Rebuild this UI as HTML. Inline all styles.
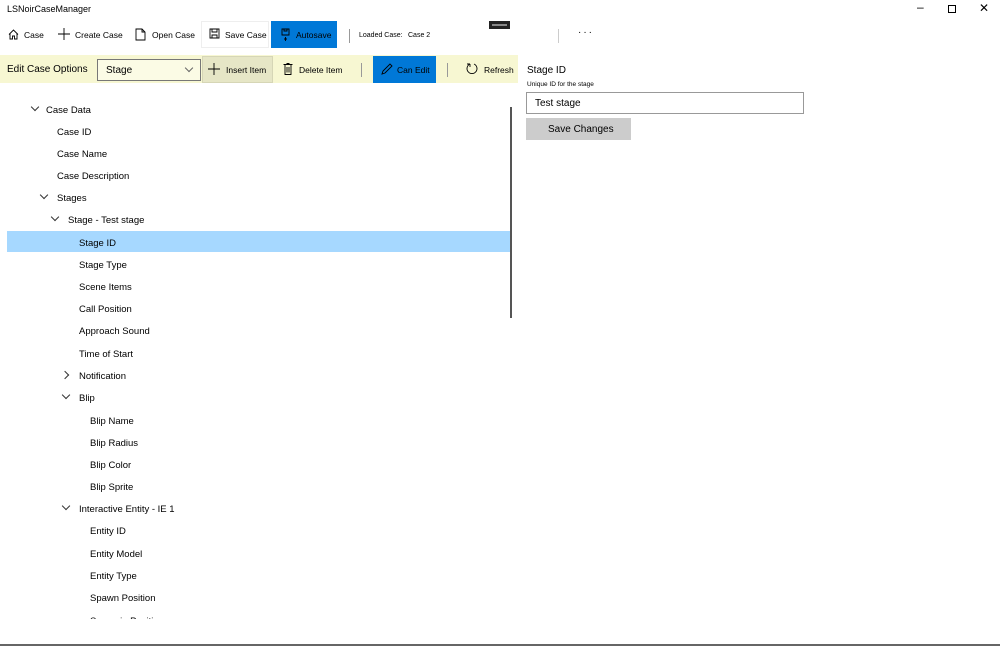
<!DOCTYPE html>
<html><head><style>
*{margin:0;padding:0;box-sizing:border-box}
body{width:1000px;height:646px;background:#fff;font-family:"Liberation Sans",sans-serif;color:#000;position:relative;overflow:hidden;font-size:8.5px}
.a{position:absolute;white-space:nowrap}
.t{font-size:9.5px;position:absolute;white-space:nowrap;margin-top:2px}
.chev{position:absolute;width:6px;height:6px;border-right:1px solid #333;border-bottom:1px solid #333}
.d{transform:rotate(45deg)}
.r{transform:rotate(-45deg)}
svg{position:absolute}
</style></head><body>
<div class="a" style="left:7px;top:4px;font-size:9px">LSNoirCaseManager</div>
<div class="a" style="left:917px;top:0px;font-size:12px">–</div>
<div class="a" style="left:948px;top:5px;width:8px;height:8px;border:1px solid #000"></div>
<div class="a" style="left:979px;top:1px;font-size:12px">✕</div>

<svg style="left:8px;top:29px" width="11" height="11" viewBox="0 0 11 11"><path d="M1 5.5L5.5 1L10 5.5M2 4.5V10H4.5V7H6.5V10H9V4.5" fill="none" stroke="#000" stroke-width="0.9"/></svg>
<div class="a" style="left:24px;top:30px">Case</div>
<svg style="left:58px;top:28px" width="12" height="12"><path d="M6 0V12M0 6H12" stroke="#000" stroke-width="0.9"/></svg>
<div class="a" style="left:75px;top:30px">Create Case</div>
<svg style="left:135px;top:28px" width="11" height="13"><path d="M1 1H7L10 4V12H1Z M7 1V4H10" fill="none" stroke="#000" stroke-width="0.9"/></svg>
<div class="a" style="left:152px;top:30px">Open Case</div>
<div class="a" style="left:201px;top:21px;width:68px;height:27px;border:1px solid #eee;background:#fff"></div>
<svg style="left:209px;top:28px" width="11" height="11"><path d="M1 1H10V10H1Z M3 1V4H8V1 M3 10V7H8V10" fill="none" stroke="#000" stroke-width="0.9"/></svg>
<div class="a" style="left:225px;top:30px">Save Case</div>
<div class="a" style="left:271px;top:21px;width:66px;height:27px;background:#0078d7"></div>
<svg style="left:281px;top:28px" width="9" height="14"><path d="M1 1H8V7H1Z M3 1V3H6V1 M4.5 9V13 M3 11H6" fill="none" stroke="#000" stroke-width="0.9"/></svg>
<div class="a" style="left:296px;top:30px">Autosave</div>
<div class="a" style="left:349px;top:29px;width:1px;height:14px;background:#999"></div>
<div class="a" style="left:359px;top:32px;font-size:7px">Loaded Case:</div>
<div class="a" style="left:408px;top:32px;font-size:7px">Case 2</div>
<div class="a" style="left:489px;top:21px;width:21px;height:8px;background:#222"></div>
<div class="a" style="left:492px;top:24px;width:15px;height:2px;background:#888"></div>
<div class="a" style="left:558px;top:29px;width:1px;height:14px;background:#ccc"></div>
<div class="a" style="left:578px;top:27px;font-size:10px;letter-spacing:2px">···</div>

<div class="a" style="left:0;top:55px;width:518px;height:28px;background:#f7f7d2"></div>
<div class="a" style="left:7px;top:64px;font-size:10px">Edit Case Options</div>
<div class="a" style="left:97px;top:59px;width:104px;height:22px;border:1.5px solid #777;background:#fbfbe5"></div>
<div class="a" style="left:106px;top:65px;font-size:10px">Stage</div>
<div class="chev d" style="left:186px;top:65px;border-color:#666"></div>
<div class="a" style="left:202px;top:56px;width:71px;height:27px;background:#e6e6c6;border:1px solid #d6d6b6"></div>
<svg style="left:208px;top:63px" width="12" height="12"><path d="M6 0V12M0 6H12" stroke="#000" stroke-width="0.9"/></svg>
<div class="a" style="left:226px;top:65px">Insert Item</div>
<svg style="left:283px;top:63px" width="10" height="12"><path d="M0.5 1.5H9.5M2 1.5V11.5H8V1.5M3.5 0.5H6.5M4 4V9.5M6 4V9.5" fill="none" stroke="#000" stroke-width="0.9"/></svg>
<div class="a" style="left:299px;top:65px">Delete Item</div>
<div class="a" style="left:361px;top:63px;width:1px;height:14px;background:#999"></div>
<div class="a" style="left:373px;top:56px;width:63px;height:27px;background:#0078d7"></div>
<svg style="left:381px;top:63px" width="12" height="12"><path d="M1 11L2 8L9 1L11 3L4 10Z" fill="none" stroke="#000" stroke-width="0.9"/></svg>
<div class="a" style="left:397px;top:65px">Can Edit</div>
<div class="a" style="left:447px;top:63px;width:1px;height:14px;background:#999"></div>
<svg style="left:466px;top:62px" width="12" height="13"><path d="M4 2A5 5 0 1 0 8 2M4 2L4 5M4 2L1 2" fill="none" stroke="#000" stroke-width="0.9"/></svg>
<div class="a" style="left:484px;top:65px">Refresh</div>

<div class="a" style="left:527px;top:65px;font-size:10px">Stage ID</div>
<div class="a" style="left:527px;top:81px;font-size:6.5px">Unique ID for the stage</div>
<div class="a" style="left:526px;top:92px;width:278px;height:22px;border:1.5px solid #999"></div>
<div class="a" style="left:535px;top:98px;font-size:10px">Test stage</div>
<div class="a" style="left:526px;top:118px;width:105px;height:22px;background:#ccc"></div>
<div class="a" style="left:548px;top:124px;font-size:10px">Save Changes</div>

<div class="a" style="left:7px;top:231px;width:503px;height:21px;background:#a6d8ff"></div>
<div class="a" style="left:510px;top:107px;width:1.5px;height:211px;background:#555"></div>
<div class="chev d" style="left:32px;top:104px"></div><div class="t" style="left:46px;top:103px">Case Data</div>
<div class="t" style="left:57px;top:125px">Case ID</div>
<div class="t" style="left:57px;top:147px">Case Name</div>
<div class="t" style="left:57px;top:169px">Case Description</div>
<div class="chev d" style="left:41px;top:192px"></div><div class="t" style="left:57px;top:191px">Stages</div>
<div class="chev d" style="left:52px;top:214px"></div><div class="t" style="left:68px;top:213px">Stage - Test stage</div>
<div class="t" style="left:79px;top:236px">Stage ID</div>
<div class="t" style="left:79px;top:258px">Stage Type</div>
<div class="t" style="left:79px;top:280px">Scene Items</div>
<div class="t" style="left:79px;top:302px">Call Position</div>
<div class="t" style="left:79px;top:324px">Approach Sound</div>
<div class="t" style="left:79px;top:347px">Time of Start</div>
<div class="chev r" style="left:62px;top:372px"></div><div class="t" style="left:79px;top:369px">Notification</div>
<div class="chev d" style="left:63px;top:392px"></div><div class="t" style="left:79px;top:391px">Blip</div>
<div class="t" style="left:90px;top:414px">Blip Name</div>
<div class="t" style="left:90px;top:436px">Blip Radius</div>
<div class="t" style="left:90px;top:458px">Blip Color</div>
<div class="t" style="left:90px;top:480px">Blip Sprite</div>
<div class="chev d" style="left:63px;top:503px"></div><div class="t" style="left:79px;top:502px">Interactive Entity - IE 1</div>
<div class="t" style="left:90px;top:524px">Entity ID</div>
<div class="t" style="left:90px;top:547px">Entity Model</div>
<div class="t" style="left:90px;top:569px">Entity Type</div>
<div class="t" style="left:90px;top:591px">Spawn Position</div>
<div style="position:absolute;left:0;top:614px;width:520px;height:5px;overflow:hidden"><div class="t" style="left:90px;top:0">Scenario Position</div></div>
<div class="a" style="left:0;top:644px;width:1000px;height:2px;background:#666"></div>
</body></html>
